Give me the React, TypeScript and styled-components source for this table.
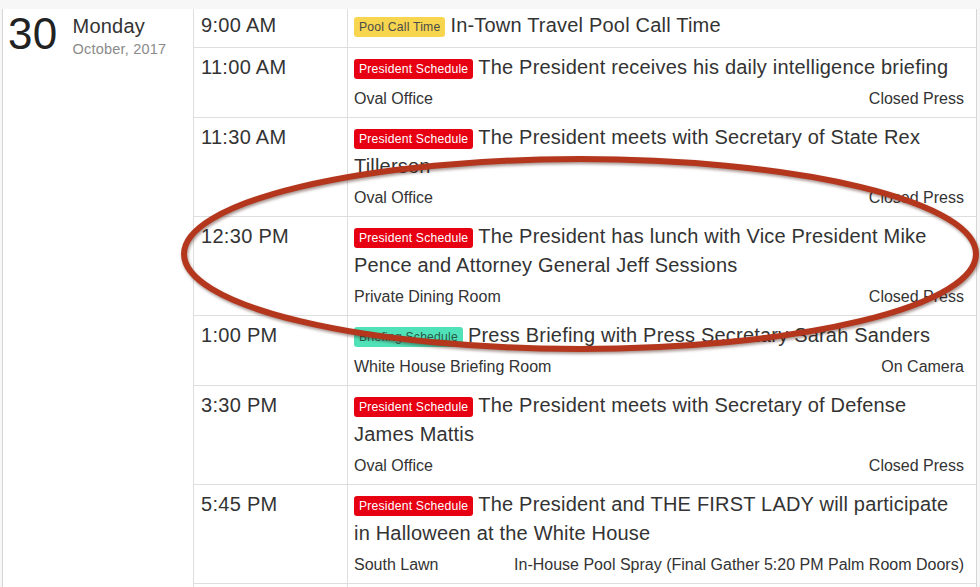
import styled, { createGlobalStyle } from 'styled-components';

const GlobalStyle = createGlobalStyle`
	html, body {
		margin: 0;
		padding: 0;
		background: #f7f7f7;
	}
	body {
		font-family: 'Liberation Sans', Arial, sans-serif;
		color: #333;
	}
`;

const Page = styled.div`
	position: relative;
	width: 980px;
	height: 587px;
	overflow: hidden;
	padding-top: 9px;
	box-sizing: border-box;
	background: #f7f7f7;
`;

const Panel = styled.div`
	display: flex;
	margin-left: 2px;
	width: 975px;
	min-height: 600px;
	background: #fff;
	border-left: 1px solid #d6d6d6;
	border-right: 1px solid #d6d6d6;
	box-sizing: border-box;
`;

const DateColumn = styled.div`
	width: 190px;
	flex-shrink: 0;
	display: flex;
	gap: 15px;
	padding: 3px 0 0 5px;
	box-sizing: border-box;
`;

const DayNumber = styled.span`
	font-size: 44px;
	line-height: 44px;
	color: #222;
	letter-spacing: 0.3px;
`;

const DayText = styled.div`
	display: flex;
	flex-direction: column;
	padding-top: 2px;
`;

const Weekday = styled.span`
	font-size: 20px;
	line-height: 24px;
	color: #333;
	letter-spacing: 0.2px;
`;

const MonthYear = styled.span`
	margin-top: 2px;
	font-size: 14.5px;
	line-height: 18px;
	letter-spacing: 0.2px;
	color: #8a8a8a;
`;

const Schedule = styled.div`
	flex: 1;
	display: flex;
	flex-direction: column;
`;

const Row = styled.div`
	display: grid;
	grid-template-columns: 154px 1fr;
	border-bottom: 1px solid #dedede;

	&:first-child > div {
		padding-top: 2px;
		padding-bottom: 7px;
	}
`;

const TimeCell = styled.div`
	border-left: 1px solid #dedede;
	padding: 5px 7px 4px;
	font-size: 20px;
	line-height: 29px;
	letter-spacing: 0.3px;
	color: #333;
`;

const EventCell = styled.div`
	border-left: 1px solid #dedede;
	padding: 5px 12px 4px 6px;
`;

const FillerRow = styled(Row)`
	height: 40px;
`;

const Title = styled.div`
	font-size: 20px;
	line-height: 29px;
	letter-spacing: 0.2px;
	color: #333;
	padding-right: 8px;
`;

const badgeColors = {
	pool: { bg: '#f8d54e', fg: '#4a4a4a' },
	president: { bg: '#e60012', fg: '#fff' },
	briefing: { bg: '#4fe2b8', fg: '#2a5a4a' },
};

type BadgeKind = keyof typeof badgeColors;

const Badge = styled.span<{ $kind: BadgeKind }>`
	display: inline-block;
	font-size: 12.2px;
	line-height: 14px;
	padding: 3px 5px;
	margin-right: 5px;
	border-radius: 3px;
	vertical-align: 1px;
	background: ${({ $kind }) => badgeColors[$kind].bg};
	color: ${({ $kind }) => badgeColors[$kind].fg};
`;

const SubLine = styled.div`
	display: flex;
	justify-content: space-between;
	margin-top: 3px;
	font-size: 16px;
	line-height: 28px;
	color: #333;
`;

const Overlay = styled.svg`
	position: absolute;
	left: 0;
	top: 0;
	pointer-events: none;
	filter: drop-shadow(1px 2px 1.5px rgba(60, 20, 10, 0.45));
`;

interface ScheduleItem {
	time: string;
	kind: BadgeKind;
	label: string;
	title: string;
	place?: string;
	coverage?: string;
}

const items: ScheduleItem[] = [
	{ time: '9:00 AM', kind: 'pool', label: 'Pool Call Time', title: 'In-Town Travel Pool Call Time' },
	{
		time: '11:00 AM',
		kind: 'president',
		label: 'President Schedule',
		title: 'The President receives his daily intelligence briefing',
		place: 'Oval Office',
		coverage: 'Closed Press',
	},
	{
		time: '11:30 AM',
		kind: 'president',
		label: 'President Schedule',
		title: 'The President meets with Secretary of State Rex Tillerson',
		place: 'Oval Office',
		coverage: 'Closed Press',
	},
	{
		time: '12:30 PM',
		kind: 'president',
		label: 'President Schedule',
		title: 'The President has lunch with Vice President Mike Pence and Attorney General Jeff Sessions',
		place: 'Private Dining Room',
		coverage: 'Closed Press',
	},
	{
		time: '1:00 PM',
		kind: 'briefing',
		label: 'Briefing Schedule',
		title: 'Press Briefing with Press Secretary Sarah Sanders',
		place: 'White House Briefing Room',
		coverage: 'On Camera',
	},
	{
		time: '3:30 PM',
		kind: 'president',
		label: 'President Schedule',
		title: 'The President meets with Secretary of Defense James Mattis',
		place: 'Oval Office',
		coverage: 'Closed Press',
	},
	{
		time: '5:45 PM',
		kind: 'president',
		label: 'President Schedule',
		title: 'The President and THE FIRST LADY will participate in Halloween at the White House',
		place: 'South Lawn',
		coverage: 'In-House Pool Spray (Final Gather 5:20 PM Palm Room Doors)',
	},
];

const App = () => {
	return (
		<Page>
			<GlobalStyle />
			<Panel>
				<DateColumn>
					<DayNumber>30</DayNumber>
					<DayText>
						<Weekday>Monday</Weekday>
						<MonthYear>October, 2017</MonthYear>
					</DayText>
				</DateColumn>

				<Schedule>
					{items.map((item) => (
						<Row key={item.time}>
							<TimeCell>{item.time}</TimeCell>
							<EventCell>
								<Title>
									<Badge $kind={item.kind}>{item.label}</Badge>
									{item.title}
								</Title>
								{item.place && (
									<SubLine>
										<span>{item.place}</span>
										<span>{item.coverage}</span>
									</SubLine>
								)}
							</EventCell>
						</Row>
					))}
					<FillerRow>
						<TimeCell />
						<EventCell />
					</FillerRow>
				</Schedule>
			</Panel>

			{/* hand-drawn highlight around the 12:30 lunch */}
			<Overlay width="980" height="587" viewBox="0 0 980 587">
				<ellipse
					cx="580"
					cy="254"
					rx="396"
					ry="95"
					fill="none"
					stroke="#b3361d"
					strokeWidth="6"
				/>
			</Overlay>
		</Page>
	);
};

export default App;
